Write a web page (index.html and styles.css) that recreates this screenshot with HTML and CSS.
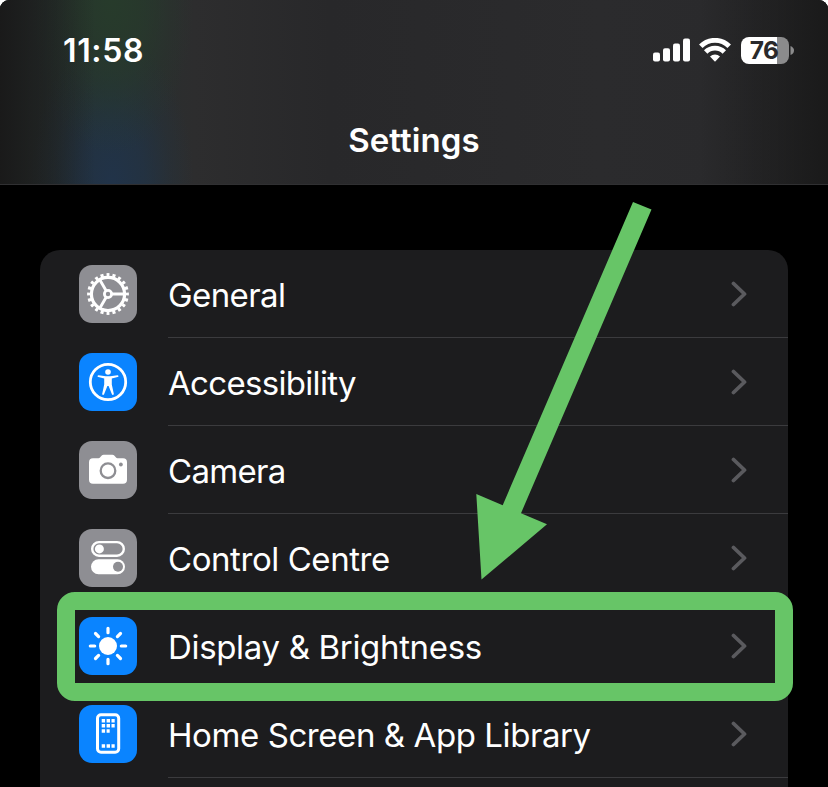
FILE: index.html
```html
<!DOCTYPE html>
<html lang="en-GB">
<head>
<meta charset="utf-8">
<title>Settings</title>
<link rel="stylesheet" href="styles.css">
</head>
<body>
<main class="phone">
  <header class="header">
    <div class="status">
      <span class="time">11:58</span>
      <div class="indicators">
        <svg class="signal" width="38" height="24" viewBox="0 0 38 24" fill="#fff"><rect x="0" y="14.5" width="7" height="9" rx="2"/><rect x="10" y="10.3" width="7" height="13.2" rx="2"/><rect x="20" y="5.5" width="7" height="18" rx="2"/><rect x="30" y="0.5" width="7" height="23" rx="2"/></svg>
        <svg class="wifi" width="32" height="24" viewBox="0 0 32 24" fill="none" stroke="#fff"><path d="M1.8 8.2a20.2 20.2 0 0 1 28.4 0" stroke-width="5"/><path d="M6.700 14a13 13 0 0 1 18.600 0" stroke-width="4.8"/><path d="M16 23.800l-5-5.200a7.100 7.100 0 0 1 10 0z" fill="#fff" stroke="none"/></svg>
        <div class="battery"><div class="cell">76</div><svg width="4" height="9" viewBox="0 0 4 9"><path d="M.5 0Q4 1.5 4 4.5T.5 9z" fill="#8b8b8c"/></svg></div>
      </div>
    </div>
    <h1 class="title">Settings</h1>
  </header>
  <ul class="list">
    <li class="row">
      <svg class="icon gray" viewBox="0 0 58 58" fill="none" stroke="#fff"><circle cx="29" cy="29" r="16.6" stroke-width="3.2"/><circle cx="29" cy="29" r="19.3" stroke-width="3.2" pathLength="80" stroke-dasharray="2 2" stroke-dashoffset="1"/><circle cx="29" cy="29" r="3.6" stroke-width="2.800"/><path d="M33 29h12M27 25.5l-6.5-11.3M27 32.5l-6.5 11.3" stroke-width="2.900"/></svg>
      <div class="cell-body"><span class="label general">General</span><svg class="chevron" viewBox="0 0 16 26"><path d="M2.500 2.500L13.500 13 2.500 23.500"/></svg></div>
    </li>
    <li class="row">
      <svg class="icon blue" viewBox="0 0 58 58"><circle cx="29" cy="29" r="17.7" fill="none" stroke="#fff" stroke-width="2.8"/><circle cx="29" cy="19" r="2.8" fill="#fff"/><path d="M19.5 22.3l7.3.9h4.4l7.3-.9q1.1.1.9 1.1 0 .5-.8.7l-5.8 1.3v6.2l2 9.2q.1 1-.8 1.2-.8.1-1.1-.8L29.6 33h-1.2l-3.3 8.2q-.4.9-1.2.8-.8-.2-.7-1.2l2-9.2v-6.2l-5.8-1.3q-.8-.2-.8-.7-.1-1 .9-1.1z" fill="#fff"/></svg>
      <div class="cell-body"><span class="label accessibility">Accessibility</span><svg class="chevron" viewBox="0 0 16 26"><path d="M2.500 2.500L13.500 13 2.500 23.500"/></svg></div>
    </li>
    <li class="row">
      <svg class="icon gray" viewBox="0 0 58 58"><path d="M14 17.2h5.5q1 0 1.7-.9l1.3-1.5q.8-1 2.2-1h8.6q1.4 0 2.2 1l1.3 1.5q.7.9 1.7.9H44q4 0 4 4v17.6q0 4-4 4H14q-4 0-4-4V21.200q0-4 4-4z" fill="#fff"/><circle cx="29" cy="29.7" r="7.3" fill="none" stroke="#8e8e93" stroke-width="2.3"/><circle cx="41.900" cy="23.500" r="1.9" fill="#8e8e93"/></svg>
      <div class="cell-body"><span class="label camera">Camera</span><svg class="chevron" viewBox="0 0 16 26"><path d="M2.500 2.500L13.500 13 2.500 23.500"/></svg></div>
    </li>
    <li class="row">
      <svg class="icon gray" viewBox="0 0 58 58"><rect x="13.200" y="13.100" width="31.600" height="13.600" rx="6.800" fill="none" stroke="#fff" stroke-width="2.4"/><circle cx="20.400" cy="19.900" r="4.500" fill="#fff"/><rect x="12" y="30.300" width="34" height="15" rx="7.500" fill="#fff"/><circle cx="39" cy="37.800" r="5" fill="#8e8e93"/></svg>
      <div class="cell-body"><span class="label control">Control Centre</span><svg class="chevron" viewBox="0 0 16 26"><path d="M2.500 2.500L13.500 13 2.500 23.500"/></svg></div>
    </li>
    <li class="row">
      <svg class="icon blue" viewBox="0 0 58 58"><circle cx="29" cy="29" r="9" fill="#fff"/><path d="M29 11.300v4.400M29 42.300v4.400M11.300 29h4.400M42.300 29h4.400M16.500 16.500l3.100 3.100M38.400 38.400l3.100 3.100M16.500 41.500l3.100-3.100M38.400 19.600l3.100-3.100" stroke="#fff" stroke-width="3.200" stroke-linecap="round"/></svg>
      <div class="cell-body"><span class="label display">Display &amp; Brightness</span><svg class="chevron" viewBox="0 0 16 26"><path d="M2.500 2.500L13.500 13 2.500 23.500"/></svg></div>
    </li>
    <li class="row">
      <svg class="icon blue" viewBox="0 0 58 58"><rect x="18.500" y="9.800" width="21.200" height="37.400" rx="3.500" fill="none" stroke="#fff" stroke-width="3"/><path d="M22.700 15.700h13M22.700 20.800h13M22.700 26h8M22.700 41h13" stroke="#fff" stroke-width="3.400" stroke-dasharray="3.400 1.500"/></svg>
      <div class="cell-body"><span class="label home">Home Screen &amp; App Library</span><svg class="chevron" viewBox="0 0 16 26"><path d="M2.500 2.500L13.500 13 2.500 23.500"/></svg></div>
    </li>
  </ul>
  <svg class="arrow" width="828" height="787" viewBox="0 0 828 787"><path d="M633 202l18.500 7.500L521 513.200l26 11L481.500 579.500 476.300 494l26.400 11.200z" fill="#67c567"/></svg>
  <div class="highlight"></div>
</main>
</body>
</html>
```
FILE: styles.css
```css
* { box-sizing: border-box; }
body { margin: 0; background: #fff; font-family: Inter, "Liberation Sans", sans-serif; color: #fff; }
.phone { position: relative; height: 787px; overflow: hidden; background: #000; border-radius: 9px 9px 0 0; }
.header {
  height: 185px;
  border-bottom: 1px solid #303032;
  background:
    linear-gradient(90deg, rgba(25,25,25,.95) 0, rgba(25,25,25,.6) 30px, rgba(25,25,25,0) 95px, rgba(25,25,25,0) 700px, rgba(25,25,25,.95) 828px),
    radial-gradient(ellipse 82px 155px at 112px 0, #273b2b 0, rgba(39,59,43,.7) 40%, rgba(39,59,43,.25) 72%, rgba(39,59,43,0) 100%),
    radial-gradient(ellipse 82px 150px at 112px 184px, #213349 0, rgba(33,51,73,.7) 40%, rgba(33,51,73,.25) 72%, rgba(33,51,73,0) 100%),
    linear-gradient(90deg, #252928 0, #26302f 110px, #2d2d2e 195px, #28282a 330px, #2b2b2d 600px, #29292b 828px);
}
.status { display: flex; justify-content: space-between; align-items: center; height: 100px; padding: 0 34px 0 63px; }
.time { padding-top: 1px; font-size: 32px; font-weight: 600; line-height: 40px; letter-spacing: .65px; }
.indicators { display: flex; align-items: center; }
.signal { margin-right: 8px; }
.wifi { margin-right: 10px; }
.battery { display: flex; align-items: center; gap: 1px; }
.cell { width: 48px; height: 27px; border-radius: 8px; background: linear-gradient(90deg, #fff 36px, #8b8b8c 36px); color: #29292b; font-size: 24.5px; font-weight: 700; line-height: 26px; text-align: center; letter-spacing: -.6px; padding-right: 2px; }
.title { margin: 20px 0 0; text-align: center; font-size: 33px; font-weight: 600; line-height: 40px; letter-spacing: .1px; }
.list { list-style: none; margin: 65px 40px 0; padding: 0; height: 537px; overflow: hidden; background: #1c1c1e; border-radius: 20px 20px 0 0; }
.row { display: flex; height: 88px; padding-left: 39px; gap: 31px; align-items: center; }
.icon { width: 58px; height: 58px; border-radius: 13px; flex: none; }
.gray { background: #8e8e93; }
.blue { background: #0a84ff; }
.cell-body { flex: 1; height: 88px; padding: 0 41px 0 0; border-bottom: 1px solid #3b3b3e; display: flex; align-items: center; justify-content: space-between; }
.label { padding-top: 2px; font-size: 33px; line-height: 40px; white-space: nowrap; }
.general { letter-spacing: -.6px; }
.accessibility { letter-spacing: -.68px; }
.camera { letter-spacing: -.7px; }
.control { letter-spacing: -.43px; }
.display { letter-spacing: -.33px; }
.home { letter-spacing: -.42px; }
.chevron { width: 16px; height: 26px; fill: none; stroke: #5a5a5e; stroke-width: 3.8; stroke-linecap: round; stroke-linejoin: round; }
.highlight { position: absolute; left: 56.5px; top: 592px; width: 736px; height: 109px; border: 18px solid #67c567; border-radius: 18px; }
.arrow { position: absolute; left: 0; top: 0; }
```
